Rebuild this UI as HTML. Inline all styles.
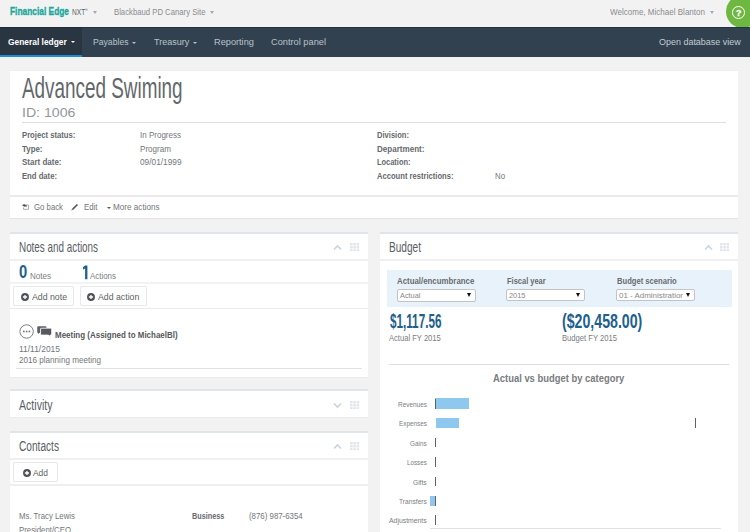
<!DOCTYPE html>
<html><head><meta charset="utf-8">
<style>
html,body{margin:0;padding:0;}
body{width:750px;height:532px;overflow:hidden;background:#f2f2f2;position:relative;font-family:"Liberation Sans",sans-serif;}
.a{position:absolute;}
.t{position:absolute;white-space:nowrap;line-height:1;transform-origin:0 0;font-family:"Liberation Sans",sans-serif;}
.car{position:absolute;width:0;height:0;border-left:2.5px solid transparent;border-right:2.5px solid transparent;border-top:3px solid #9a9c9f;}
.card{position:absolute;background:#fff;}
.hl{position:absolute;height:1px;background:#e4e4e4;}
.btn{position:absolute;background:#fff;border:1px solid #e8e8e8;border-radius:2px;box-sizing:border-box;}
.sel{position:absolute;background:#fff;border:1px solid #c4c4c4;overflow:hidden;border-radius:2px;box-sizing:border-box;}
.tri{position:absolute;width:0;height:0;border-left:2.5px solid transparent;border-right:2.5px solid transparent;border-top:4px solid #111;}
.grid{position:absolute;width:9px;height:9px;background-image:linear-gradient(90deg,#fff 0,#fff 0) ;}
</style></head><body>
<!-- nav -->
<div class="a" style="left:0;top:27px;width:750px;height:30px;background:#32414f;border-top:1px solid #263442;box-sizing:border-box"></div>
<div class="a" style="left:0;top:27px;width:82px;height:30px;background:#293642;border-top:1px solid #222e3a;box-sizing:border-box"></div>
<div class="a" style="left:0;top:54.5px;width:82px;height:2.5px;background:#1f8ad6"></div>
<div class="car" style="left:93.2px;top:10.8px;border-left-width:2.4px;border-right-width:2.4px;border-top-width:3px;border-top-color:#a6a8ab"></div>
<div class="car" style="left:209.8px;top:10.8px;border-left-width:2.4px;border-right-width:2.4px;border-top-width:3px;border-top-color:#a6a8ab"></div>
<div class="car" style="left:709.6px;top:10.8px;border-left-width:2.4px;border-right-width:2.4px;border-top-width:3px;border-top-color:#a6a8ab"></div>
<div class="car" style="left:70.8px;top:41.3px;border-top-color:#fff;border-left-width:2px;border-right-width:2px;border-top-width:2px"></div>
<div class="car" style="left:132.2px;top:42px;border-top-color:#b9c1ca;border-left-width:2px;border-right-width:2px;border-top-width:2.3px"></div>
<div class="car" style="left:192.8px;top:42px;border-top-color:#b9c1ca;border-left-width:2px;border-right-width:2px;border-top-width:2.3px"></div>
<!-- help -->
<div class="a" style="left:700px;top:0;width:50px;height:27px;overflow:hidden"><div class="a" style="left:26px;top:-5.2px;width:33px;height:33px;border-radius:50%;background:#6eb842"></div></div>
<div class="a" style="left:732px;top:6.4px;width:10.6px;height:10.6px;border-radius:50%;border:1.4px solid #fff;"></div>
<div class="t" style="left:735.8px;top:7.9px;font-size:9.4px;font-weight:700;color:#fff;-webkit-text-stroke:0.3px #fff">?</div>

<!-- header card -->
<div class="card" style="left:10px;top:70px;width:728px;height:149px;border-top:1px solid #eceef0;border-bottom:1px solid #e2e2e2;box-sizing:border-box"></div>
<div class="hl" style="left:22px;top:122px;width:704px;height:1px;background:#dedede"></div>
<div class="hl" style="left:10px;top:195px;width:728px;height:2px;background:#ebebeb"></div>
<!-- go back icon -->
<svg class="a" style="left:21px;top:203px" width="10" height="8" viewBox="0 0 10 8"><path d="M3 2H7.6V6.3H2.5V4.5" fill="none" stroke="#a9acb0" stroke-width="1"/><path d="M1 2.3L3.6 0.8V2H5.3L6.2 3.6H3.6V3.9Z" fill="#505459"/></svg>
<!-- pencil -->
<svg class="a" style="left:70px;top:203px" width="9" height="8" viewBox="0 0 9 8"><path d="M2.2 5.6L6.9 0.9L8 2L3.3 6.7Z" fill="#4f5358"/><path d="M2.2 5.6L3.3 6.7L1.2 7.4Z" fill="#6a6e72"/></svg>
<div class="car" style="left:106.5px;top:207.2px;border-top-color:#55585c;border-left-width:2.3px;border-right-width:2.3px;border-top-width:2.5px"></div>

<!-- notes panel -->
<div class="card" style="left:10px;top:231.5px;width:358px;height:146.5px;border-top:2px solid #e0e5e9;border-bottom:1px solid #ececec;box-sizing:border-box"></div>
<div class="hl" style="left:10px;top:259px;width:358px;height:2px;background:#f0f0f1"></div>
<div class="hl" style="left:10px;top:282px;width:358px;height:2px;background:#f2f3f4"></div>
<div class="hl" style="left:10px;top:308px;width:358px;height:1px;background:#e9ebeb"></div>
<div class="btn" style="left:13.2px;top:286.4px;width:61px;height:20px"></div>
<div class="btn" style="left:80px;top:286.4px;width:66.7px;height:20px"></div>
<div class="hl" style="left:16px;top:367.5px;width:346px;background:#e2e2e2"></div>

<!-- activity -->
<div class="card" style="left:10px;top:389.3px;width:358px;height:28.7px;border-top:2px solid #e0e5e9;border-bottom:1px solid #ececec;box-sizing:border-box"></div>
<!-- contacts -->
<div class="card" style="left:10px;top:430.5px;width:358px;height:110px;border-top:2px solid #e0e5e9;box-sizing:border-box"></div>
<div class="hl" style="left:10px;top:458px;width:358px;height:2px;background:#f0f0f1"></div>
<div class="btn" style="left:13.1px;top:462.3px;width:45px;height:20px"></div>
<div class="hl" style="left:10px;top:484px;width:358px;height:1.5px;background:#eeefef"></div>

<!-- budget -->
<div class="card" style="left:380px;top:231.5px;width:358px;height:310px;border-top:2px solid #e0e5e9;box-sizing:border-box"></div>
<div class="hl" style="left:380px;top:259px;width:358px;height:2px;background:#efefef"></div>
<div class="a" style="left:386.8px;top:269.8px;width:345px;height:37.5px;background:#e8f2fa"></div>
<div class="sel" style="left:397.4px;top:289.3px;width:78.5px;height:12.4px"></div>
<div class="sel" style="left:506.3px;top:289.1px;width:78.4px;height:12.4px"></div>
<div class="sel" style="left:616px;top:289.3px;width:78.7px;height:12.2px"></div>
<div class="tri" style="left:467px;top:293.3px"></div>
<div class="tri" style="left:576px;top:293.3px"></div>
<div class="tri" style="left:685.5px;top:293.3px"></div>
<div class="hl" style="left:389px;top:364px;width:340px;background:#dcdcdc"></div>
<!-- chart -->
<div class="a" style="left:435.2px;top:398.2px;width:33.6px;height:10.8px;background:#8ec8ee"></div>
<div class="a" style="left:435.9px;top:417.9px;width:23.3px;height:10.3px;background:#8ec8ee"></div>
<div class="a" style="left:430.2px;top:495.7px;width:5.8px;height:10.3px;background:#8ec8ee"></div>
<div class="a" style="left:435px;top:398.5px;width:1px;height:10px;background:#5d6268"></div>
<div class="a" style="left:435px;top:437.5px;width:1px;height:9.5px;background:#5d6268"></div>
<div class="a" style="left:435px;top:457px;width:1px;height:9.5px;background:#5d6268"></div>
<div class="a" style="left:435px;top:476.5px;width:1px;height:9.5px;background:#5d6268"></div>
<div class="a" style="left:435px;top:496px;width:1px;height:9.5px;background:#5d6268"></div>
<div class="a" style="left:435px;top:515.3px;width:1px;height:9.5px;background:#5d6268"></div>
<div class="a" style="left:694.7px;top:417.5px;width:1px;height:10.4px;background:#5d6268"></div>
<div class="a" style="left:430.2px;top:527.6px;width:290.7px;height:1px;background:#e0e0e0"></div>


<!-- panel header icons -->
<svg class="a" style="left:333px;top:244px" width="9" height="7" viewBox="0 0 9 7"><path d="M1 5.5L4.5 2L8 5.5" fill="none" stroke="#c9d5dd" stroke-width="1.7"/></svg>
<svg class="a" style="left:333px;top:402px" width="9" height="7" viewBox="0 0 9 7"><path d="M1 1.5L4.5 5L8 1.5" fill="none" stroke="#c9d5dd" stroke-width="1.7"/></svg>
<svg class="a" style="left:333px;top:443px" width="9" height="7" viewBox="0 0 9 7"><path d="M1 5.5L4.5 2L8 5.5" fill="none" stroke="#c9d5dd" stroke-width="1.7"/></svg>
<svg class="a" style="left:703.5px;top:244px" width="9" height="7" viewBox="0 0 9 7"><path d="M1 5.5L4.5 2L8 5.5" fill="none" stroke="#c9d5dd" stroke-width="1.7"/></svg>
<svg class="a" style="left:349.8px;top:242.6px" width="9.2" height="8.6" viewBox="0 0 9.2 8.6"><g fill="#e2e6eb"><rect x="0" y="0" width="2.6" height="2.4"/><rect x="3.3" y="0" width="2.6" height="2.4"/><rect x="6.6" y="0" width="2.6" height="2.4"/><rect x="0" y="3.1" width="2.6" height="2.4"/><rect x="3.3" y="3.1" width="2.6" height="2.4"/><rect x="6.6" y="3.1" width="2.6" height="2.4"/><rect x="0" y="6.2" width="2.6" height="2.4"/><rect x="3.3" y="6.2" width="2.6" height="2.4"/><rect x="6.6" y="6.2" width="2.6" height="2.4"/></g></svg>
<svg class="a" style="left:349.8px;top:400.8px" width="9.2" height="8.6" viewBox="0 0 9.2 8.6"><g fill="#e2e6eb"><rect x="0" y="0" width="2.6" height="2.4"/><rect x="3.3" y="0" width="2.6" height="2.4"/><rect x="6.6" y="0" width="2.6" height="2.4"/><rect x="0" y="3.1" width="2.6" height="2.4"/><rect x="3.3" y="3.1" width="2.6" height="2.4"/><rect x="6.6" y="3.1" width="2.6" height="2.4"/><rect x="0" y="6.2" width="2.6" height="2.4"/><rect x="3.3" y="6.2" width="2.6" height="2.4"/><rect x="6.6" y="6.2" width="2.6" height="2.4"/></g></svg>
<svg class="a" style="left:349.8px;top:441.8px" width="9.2" height="8.6" viewBox="0 0 9.2 8.6"><g fill="#e2e6eb"><rect x="0" y="0" width="2.6" height="2.4"/><rect x="3.3" y="0" width="2.6" height="2.4"/><rect x="6.6" y="0" width="2.6" height="2.4"/><rect x="0" y="3.1" width="2.6" height="2.4"/><rect x="3.3" y="3.1" width="2.6" height="2.4"/><rect x="6.6" y="3.1" width="2.6" height="2.4"/><rect x="0" y="6.2" width="2.6" height="2.4"/><rect x="3.3" y="6.2" width="2.6" height="2.4"/><rect x="6.6" y="6.2" width="2.6" height="2.4"/></g></svg>
<svg class="a" style="left:720.2px;top:242.6px" width="9.2" height="8.6" viewBox="0 0 9.2 8.6"><g fill="#e2e6eb"><rect x="0" y="0" width="2.6" height="2.4"/><rect x="3.3" y="0" width="2.6" height="2.4"/><rect x="6.6" y="0" width="2.6" height="2.4"/><rect x="0" y="3.1" width="2.6" height="2.4"/><rect x="3.3" y="3.1" width="2.6" height="2.4"/><rect x="6.6" y="3.1" width="2.6" height="2.4"/><rect x="0" y="6.2" width="2.6" height="2.4"/><rect x="3.3" y="6.2" width="2.6" height="2.4"/><rect x="6.6" y="6.2" width="2.6" height="2.4"/></g></svg>
<!-- plus circle icons -->
<svg class="a" style="left:20.6px;top:292.6px" width="8" height="8" viewBox="0 0 8 8"><circle cx="4" cy="4" r="3.95" fill="#4f5256"/><path d="M4 1.9V6.1M1.9 4H6.1" stroke="#fff" stroke-width="1.3"/></svg>
<svg class="a" style="left:87.2px;top:292.6px" width="8" height="8" viewBox="0 0 8 8"><circle cx="4" cy="4" r="3.95" fill="#4f5256"/><path d="M4 1.9V6.1M1.9 4H6.1" stroke="#fff" stroke-width="1.3"/></svg>
<svg class="a" style="left:22.5px;top:468.5px" width="8" height="8" viewBox="0 0 8 8"><circle cx="4" cy="4" r="3.95" fill="#4f5256"/><path d="M4 1.9V6.1M1.9 4H6.1" stroke="#fff" stroke-width="1.3"/></svg>
<!-- meeting icons -->
<svg class="a" style="left:19px;top:323.5px" width="15" height="15" viewBox="0 0 15 15"><circle cx="7.6" cy="7.5" r="6.7" fill="none" stroke="#7d8084" stroke-width="1"/><rect x="4" y="6.7" width="1.6" height="1.6" fill="#6d7074"/><rect x="6.8" y="6.7" width="1.6" height="1.6" fill="#6d7074"/><rect x="9.6" y="6.7" width="1.6" height="1.6" fill="#6d7074"/></svg>
<svg class="a" style="left:37px;top:325.5px" width="15" height="11" viewBox="0 0 15 11"><path d="M1.2 0.3H8.5Q9.5 0.3 9.5 1.3V2H4.5Q3 2 3 3.5V7H2.2L1.2 8.2V7H1Q0.2 7 0.2 6V1.3Q0.2 0.3 1.2 0.3Z" fill="#5f6368"/><path d="M4.6 2.2H13.6Q14.6 2.2 14.6 3.2V8Q14.6 9 13.6 9H13.2V10.6L11.6 9H4.6Q3.6 9 3.6 8V3.2Q3.6 2.2 4.6 2.2Z" fill="#55595e" stroke="#fff" stroke-width="0.7"/></svg>

<svg class="a" style="left:82px;top:264.5px" width="6" height="15" viewBox="0 0 6 15"><path d="M3.1 0.6H5.4V14.3H3.1V3.6L1 4.4V2.3Z" fill="#1d5f8f"/></svg>
<div class="t" style="left:10.00px;top:5.50px;font-size:11.2px;font-weight:700;color:#21a79a;transform:scaleX(0.7473);-webkit-text-stroke:0.35px #21a79a;">Financial Edge</div>
<div class="t" style="left:71.70px;top:7.50px;font-size:8.4px;font-weight:400;color:#5d5f62;transform:scaleX(0.7881);">NXT</div>
<div class="t" style="left:85.20px;top:7.80px;font-size:5px;font-weight:400;color:#5d5f62;transform:scaleX(0.5200);">™</div>
<div class="t" style="left:113.50px;top:8.00px;font-size:9.0px;font-weight:400;color:#8a8c8f;transform:scaleX(0.8587);">Blackbaud PD Canary Site</div>
<div class="t" style="left:610.00px;top:8.00px;font-size:9.0px;font-weight:400;color:#8a8c8f;transform:scaleX(0.8929);">Welcome, Michael Blanton</div>
<div class="t" style="left:7.80px;top:38.10px;font-size:8.9px;font-weight:700;color:#ffffff;transform:scaleX(0.9460);">General ledger</div>
<div class="t" style="left:92.70px;top:38.10px;font-size:8.9px;font-weight:400;color:#b9c1ca;transform:scaleX(0.9722);">Payables</div>
<div class="t" style="left:153.80px;top:38.10px;font-size:8.9px;font-weight:400;color:#b9c1ca;transform:scaleX(1.0148);">Treasury</div>
<div class="t" style="left:214.00px;top:38.10px;font-size:8.9px;font-weight:400;color:#b9c1ca;transform:scaleX(1.0368);">Reporting</div>
<div class="t" style="left:270.50px;top:38.10px;font-size:8.9px;font-weight:400;color:#b9c1ca;transform:scaleX(1.0417);">Control panel</div>
<div class="t" style="left:659.00px;top:38.10px;font-size:8.9px;font-weight:400;color:#c3cad2;transform:scaleX(1.0096);">Open database view</div>
<div class="t" style="left:22.40px;top:74.20px;font-size:28.8px;font-weight:300;color:#63676c;transform:scaleX(0.6558);">Advanced Swiming</div>
<div class="t" style="left:22.40px;top:106.00px;font-size:13.4px;font-weight:400;color:#94979b;transform:scaleX(1.0548);">ID: 1006</div>
<div class="t" style="left:22.00px;top:132.00px;font-size:8.2px;font-weight:700;color:#66696d;transform:scaleX(0.9389);">Project status:</div>
<div class="t" style="left:22.00px;top:145.60px;font-size:8.2px;font-weight:700;color:#66696d;transform:scaleX(0.9654);">Type:</div>
<div class="t" style="left:22.00px;top:159.30px;font-size:8.2px;font-weight:700;color:#66696d;transform:scaleX(0.9753);">Start date:</div>
<div class="t" style="left:22.00px;top:173.00px;font-size:8.2px;font-weight:700;color:#66696d;transform:scaleX(0.9380);">End date:</div>
<div class="t" style="left:140.00px;top:132.00px;font-size:8.2px;font-weight:400;color:#73767a;transform:scaleX(0.9791);">In Progress</div>
<div class="t" style="left:140.00px;top:145.60px;font-size:8.2px;font-weight:400;color:#73767a;transform:scaleX(0.9871);">Program</div>
<div class="t" style="left:140.00px;top:159.30px;font-size:8.2px;font-weight:400;color:#73767a;transform:scaleX(1.0126);">09/01/1999</div>
<div class="t" style="left:376.50px;top:132.00px;font-size:8.2px;font-weight:700;color:#66696d;transform:scaleX(0.9254);">Division:</div>
<div class="t" style="left:376.50px;top:145.60px;font-size:8.2px;font-weight:700;color:#66696d;transform:scaleX(0.9848);">Department:</div>
<div class="t" style="left:376.50px;top:159.30px;font-size:8.2px;font-weight:700;color:#66696d;transform:scaleX(0.9092);">Location:</div>
<div class="t" style="left:376.50px;top:173.00px;font-size:8.2px;font-weight:700;color:#66696d;transform:scaleX(0.9290);">Account restrictions:</div>
<div class="t" style="left:495.00px;top:173.00px;font-size:8.2px;font-weight:400;color:#73767a;transform:scaleX(0.9552);">No</div>
<div class="t" style="left:34.00px;top:203.00px;font-size:8.6px;font-weight:400;color:#73767a;transform:scaleX(0.9058);">Go back</div>
<div class="t" style="left:83.50px;top:203.00px;font-size:8.6px;font-weight:400;color:#73767a;transform:scaleX(0.9114);">Edit</div>
<div class="t" style="left:113.00px;top:203.00px;font-size:8.6px;font-weight:400;color:#73767a;transform:scaleX(0.9471);">More actions</div>
<div class="t" style="left:19.20px;top:239.20px;font-size:15px;font-weight:300;color:#5a5e63;transform:scaleX(0.6579);">Notes and actions</div>
<div class="t" style="left:19.20px;top:263.30px;font-size:18.6px;font-weight:700;color:#1d5f8f;transform:scaleX(0.7927);">0</div>
<div class="t" style="left:30.10px;top:272.60px;font-size:8.2px;font-weight:400;color:#7b7e82;transform:scaleX(0.9817);">Notes</div>
<div class="t" style="left:90.20px;top:272.60px;font-size:8.2px;font-weight:400;color:#7b7e82;transform:scaleX(0.9680);">Actions</div>
<div class="t" style="left:31.50px;top:293.00px;font-size:9.0px;font-weight:400;color:#5c5f63;transform:scaleX(0.9714);">Add note</div>
<div class="t" style="left:97.70px;top:293.00px;font-size:9.0px;font-weight:400;color:#5c5f63;transform:scaleX(0.9711);">Add action</div>
<div class="t" style="left:54.70px;top:331.00px;font-size:8.6px;font-weight:700;color:#55585c;transform:scaleX(0.9269);">Meeting (Assigned to MichaelBl)</div>
<div class="t" style="left:19.20px;top:345.20px;font-size:8.6px;font-weight:400;color:#73767a;transform:scaleX(0.9824);">11/11/2015</div>
<div class="t" style="left:19.20px;top:355.90px;font-size:8.6px;font-weight:400;color:#73767a;transform:scaleX(0.9429);">2016 planning meeting</div>
<div class="t" style="left:18.90px;top:397.00px;font-size:15.2px;font-weight:300;color:#5a5e63;transform:scaleX(0.6963);">Activity</div>
<div class="t" style="left:18.90px;top:437.80px;font-size:15.2px;font-weight:300;color:#5a5e63;transform:scaleX(0.6674);">Contacts</div>
<div class="t" style="left:33.00px;top:469.10px;font-size:9.0px;font-weight:400;color:#5c5f63;transform:scaleX(0.9366);">Add</div>
<div class="t" style="left:19.10px;top:512.20px;font-size:8.6px;font-weight:400;color:#73767a;transform:scaleX(0.9090);">Ms. Tracy Lewis</div>
<div class="t" style="left:19.10px;top:525.60px;font-size:8.6px;font-weight:400;color:#73767a;transform:scaleX(0.9071);">President/CEO</div>
<div class="t" style="left:191.70px;top:512.20px;font-size:8.6px;font-weight:700;color:#66696d;transform:scaleX(0.8451);">Business</div>
<div class="t" style="left:248.60px;top:512.20px;font-size:8.6px;font-weight:400;color:#73767a;transform:scaleX(0.9136);">(876) 987-6354</div>
<div class="t" style="left:389.00px;top:239.20px;font-size:15px;font-weight:300;color:#5a5e63;transform:scaleX(0.6730);">Budget</div>
<div class="t" style="left:397.40px;top:277.10px;font-size:8.6px;font-weight:700;color:#686b70;transform:scaleX(0.9143);">Actual/encumbrance</div>
<div class="t" style="left:506.50px;top:277.10px;font-size:8.6px;font-weight:700;color:#686b70;transform:scaleX(0.8709);">Fiscal year</div>
<div class="t" style="left:616.60px;top:277.10px;font-size:8.6px;font-weight:700;color:#686b70;transform:scaleX(0.8865);">Budget scenario</div>
<div class="t" style="left:400.20px;top:292.20px;font-size:7.6px;font-weight:400;color:#85888c;transform:scaleX(0.9664);">Actual</div>
<div class="t" style="left:509.00px;top:292.20px;font-size:7.6px;font-weight:400;color:#85888c;transform:scaleX(0.9760);">2015</div>
<div class="t" style="left:619.00px;top:292.20px;font-size:7.6px;font-weight:400;color:#85888c;transform:scaleX(1.0457);">01 - Administratior</div>
<div class="t" style="left:389.50px;top:312.40px;font-size:19.6px;font-weight:700;color:#1d5f8f;transform:scaleX(0.5970);">$1,117.56</div>
<div class="t" style="left:389.20px;top:334.00px;font-size:8.6px;font-weight:400;color:#797c80;transform:scaleX(0.8838);">Actual FY 2015</div>
<div class="t" style="left:562.00px;top:312.40px;font-size:19.6px;font-weight:700;color:#1d5f8f;transform:scaleX(0.7226);">($20,458.00)</div>
<div class="t" style="left:562.00px;top:334.00px;font-size:8.6px;font-weight:400;color:#797c80;transform:scaleX(0.8875);">Budget FY 2015</div>
<div class="t" style="left:493.30px;top:374.20px;font-size:10.0px;font-weight:700;color:#797c80;transform:scaleX(0.9413);">Actual vs budget by category</div>
<div class="t" style="left:397.90px;top:400.60px;font-size:7.3px;font-weight:400;color:#7a7d81;transform:scaleX(0.8825);">Revenues</div>
<div class="t" style="left:399.00px;top:420.20px;font-size:7.3px;font-weight:400;color:#7a7d81;transform:scaleX(0.8706);">Expenses</div>
<div class="t" style="left:410.30px;top:439.50px;font-size:7.3px;font-weight:400;color:#7a7d81;transform:scaleX(0.8708);">Gains</div>
<div class="t" style="left:407.10px;top:459.10px;font-size:7.3px;font-weight:400;color:#7a7d81;transform:scaleX(0.8562);">Losses</div>
<div class="t" style="left:413.30px;top:478.80px;font-size:7.3px;font-weight:400;color:#7a7d81;transform:scaleX(0.9067);">Gifts</div>
<div class="t" style="left:399.00px;top:498.20px;font-size:7.3px;font-weight:400;color:#7a7d81;transform:scaleX(0.9134);">Transfers</div>
<div class="t" style="left:389.20px;top:517.40px;font-size:7.3px;font-weight:400;color:#7a7d81;transform:scaleX(0.9388);">Adjustments</div>
</body></html>
